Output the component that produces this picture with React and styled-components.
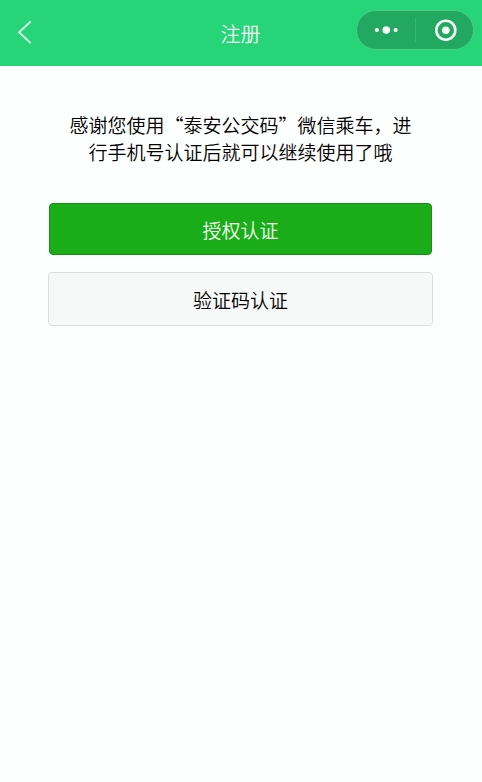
import React from 'react'
import styled, { createGlobalStyle } from 'styled-components'

const GlobalStyle = createGlobalStyle`
  * {
    box-sizing: border-box;
  }
  body {
    margin: 0;
    background: #fdfefe;
    font-family: "Noto Sans CJK SC", sans-serif;
    font-weight: 350;
  }
`;

const Page = styled.div`
  height: 782px;
  overflow: hidden;
`;

const Header = styled.header`
  display: grid;
  grid-template-columns: 1fr auto 1fr;
  align-items: center;
  height: 66px;
  padding: 0 8px 6px 17px;
  background: #28d478;
  color: #fff;
`;

const Back = styled.svg`
  width: 16px;
  height: 24px;
  margin-top: 4px;
  color: #d9fae5;
`;

const Title = styled.h1`
  margin: 7px 0 0 -10px;
  color: #effff4;
  font-size: 20px;
  font-weight: 350;
  line-height: 30px;
`;

const Capsule = styled.div`
  display: flex;
  align-items: center;
  justify-self: end;
  width: 118px;
  height: 40px;
  padding-left: 1px;
  border: 1px solid #48cf83;
  border-radius: 20px;
  background: #22a861;
  color: #f5fff4;
`;

const CapsuleButton = styled.div`
  display: flex;
  flex: 1;
  align-items: center;
  justify-content: center;
`;

const Divider = styled.div`
  width: 1px;
  height: 24px;
  background: #38b472;
`;

const Content = styled.main`
  display: flex;
  flex-direction: column;
  align-items: center;
  padding: 45px 1px 0 0;
`;

const Message = styled.p`
  width: 350px;
  margin: 0 0 38px;
  color: #000;
  font-size: 19px;
  line-height: 27px;
  text-align: center;
`;

const Button = styled.button`
  width: ${props => props.$primary ? '383px' : '385px'};
  height: ${props => props.$primary ? '52px' : '54px'};
  margin: 0 0 17px;
  padding: 0;
  border: 1px solid ${props => props.$primary ? '#178d17' : '#dcdddd'};
  border-radius: 4px;
  background: ${props => props.$primary ? '#1aad19' : '#f7f8f8'};
  color: ${props => props.$primary ? '#f2fff0' : '#000'};
  font-family: inherit;
  font-size: 19px;
  font-weight: inherit;
`;

export default function App() {
  return (
    <Page>
      <GlobalStyle />
      <Header>
        <Back viewBox="0 0 16 24" fill="none" stroke="currentColor" strokeWidth="1.9">
          <path d="M13.7 1.5 2 12.3l11.7 10.8" />
        </Back>
        <Title>注册</Title>
        <Capsule>
          <CapsuleButton>
            <svg width="26" height="10" fill="currentColor">
              <circle cx="2.9" cy="5" r="2.1" />
              <circle cx="12.3" cy="5" r="3.8" />
              <circle cx="21.6" cy="5" r="2.1" />
            </svg>
          </CapsuleButton>
          <Divider />
          <CapsuleButton>
            <svg width="24" height="24" fill="none" stroke="currentColor" strokeWidth="2.6">
              <circle cx="12.8" cy="12.2" r="9.5" />
              <circle cx="12.8" cy="12.2" r="3.8" fill="currentColor" stroke="none" />
            </svg>
          </CapsuleButton>
        </Capsule>
      </Header>
      <Content>
        <Message>
          感谢您使用“泰安公交码”微信乘车，进<br />
          行手机号认证后就可以继续使用了哦
        </Message>
        <Button $primary>授权认证</Button>
        <Button>验证码认证</Button>
      </Content>
    </Page>
  )
}
